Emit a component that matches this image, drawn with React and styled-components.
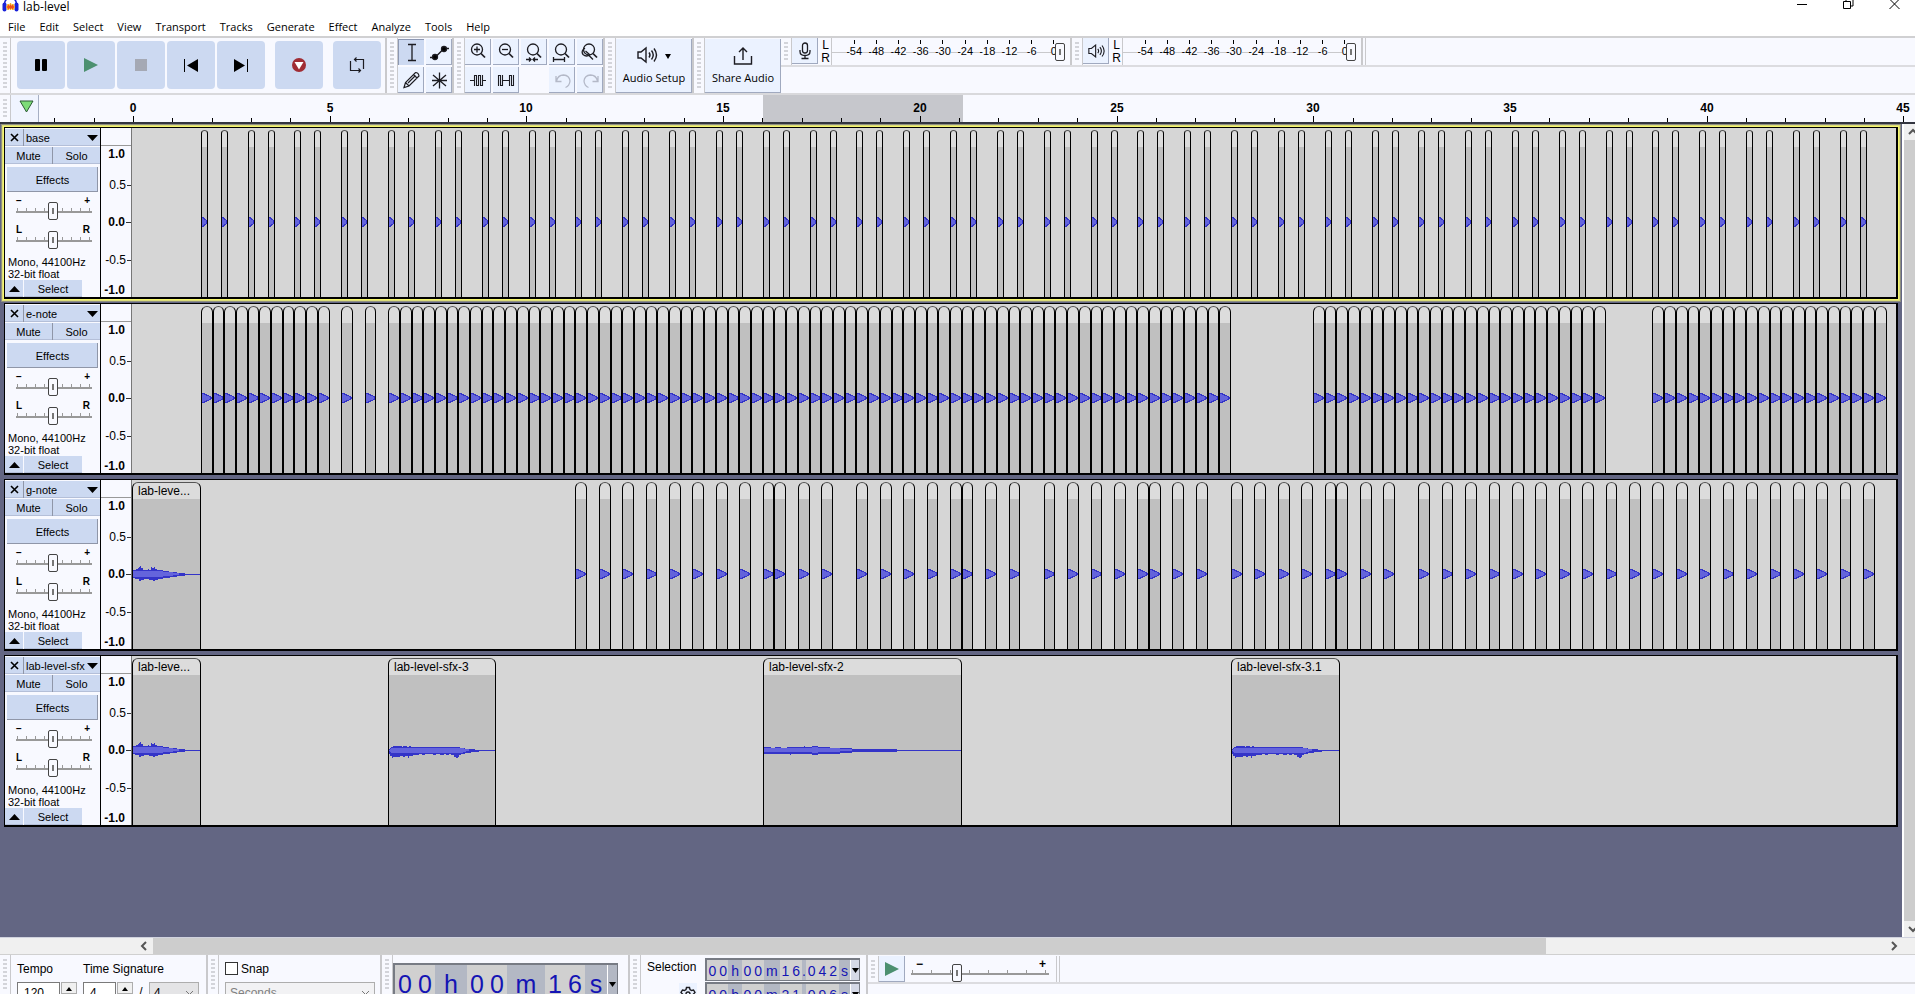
import React from 'react';
import styled, { createGlobalStyle, css } from 'styled-components';

const GlobalStyle = createGlobalStyle`
  * {
    box-sizing: border-box;
  }
  body {
    margin: 0;
    overflow: hidden;
    font-family: 'Liberation Sans', Arial, sans-serif;
    font-size: 12px;
    color: #000;
  }
  button, input, select {
    margin: 0;
    padding: 0;
    border: 0;
    border-radius: 0;
    font: inherit;
    color: inherit;
    background: none;
  }
  svg {
    display: block;
    flex: none;
  }
`;

const SEGOE = "'Open Sans', 'Noto Sans', sans-serif";
const BG = '#f8f9ff';
const LINE = '#c9c9cc';

const Window = styled.div`
  display: flex;
  flex-direction: column;
  height: 100vh;
  background: ${BG};
`;

/* ---------- title + menu ---------- */

const TitleBar = styled.header`
  display: flex;
  flex: none;
  align-items: flex-start;
  gap: 4px;
  height: 14px;
  padding-left: 2px;
  background: #fff;
  font-family: ${SEGOE};
  h1 {
    flex: 1;
    margin: 0;
    font-size: 12px;
    line-height: 14px;
    font-weight: 400;
  }
`;

const WindowButton = styled.button`
  display: flex;
  justify-content: center;
  width: 42px;
`;

const MenuBar = styled.nav`
  display: flex;
  flex: none;
  gap: 14px;
  height: 22px;
  padding: 4px 0 0 8px;
  background: #fff;
  font-family: ${SEGOE};
  font-size: 11px;
  line-height: 18px;
`;

/* ---------- toolbars ---------- */

const ToolDock = styled.div`
  display: flex;
  flex: none;
  border-top: 2px solid #d0d0d2;
  border-bottom: 2px solid #d9d9dc;
`;

const Toolbar = styled.div`
  display: flex;
  flex: none;
  border-right: ${(p) => (p.$last ? 0 : 2)}px solid ${LINE};
`;

const Gripper = styled.div`
  flex: none;
  width: 11px;
  padding: 4px 3px;
  border-right: 1px solid ${LINE};
  &::before {
    content: '';
    display: block;
    height: 100%;
    background: repeating-linear-gradient(#d3d4da 0 2px, transparent 2px 4px);
  }
`;

const TransportRow = styled.div`
  display: flex;
  gap: 2px;
  padding: 3px 4px 4px 6px;
`;

const BigButton = styled.button`
  display: flex;
  align-items: center;
  justify-content: center;
  width: 48px;
  height: 48px;
  margin-left: ${(p) => (p.$apart ? 8 : 0)}px;
  border-radius: 4px;
  background: #ccd9f1;
`;

const ToolGrid = styled.div`
  display: grid;
  grid-template-columns: repeat(${(p) => p.$cols}, 26px);
  grid-auto-rows: 26px;
  gap: 2px;
  padding-top: 1px;
`;

const raised = css`
  background: #ebf2ff;
  box-shadow: inset -1px -1px #a0a9bf;
`;

const ToolButton = styled.button`
  display: flex;
  flex: none;
  align-items: center;
  justify-content: center;
  width: 26px;
  height: 26px;
  ${raised}
  ${(p) =>
    p.$pressed &&
    css`
      background: #ccd9f1;
      box-shadow: inset 1px 1px #8c97b2;
    `}
`;

const LabelledButton = styled.button`
  display: flex;
  flex-direction: column;
  align-items: center;
  justify-content: space-between;
  width: 76px;
  margin-top: 1px;
  padding: 7px 0 7px;
  ${raised}
  font-family: ${SEGOE};
  font-size: 11px;
  line-height: 16px;
  white-space: nowrap;
`;

const MeterDock = styled.div`
  flex: 1;
  min-width: 0;
`;

const MeterRow = styled.div`
  display: flex;
  height: 29px;
  border-bottom: 2px solid #dcdce0;
`;

const Meter = styled.div`
  display: flex;
  width: 291px;
  padding-right: 5px;
  border-right: 2px solid ${LINE};
`;

const Channels = styled.div`
  display: flex;
  flex-direction: column;
  align-items: center;
  width: 13px;
  padding: 1px 0 0 2px;
  line-height: 13px;
`;

const MeterScale = styled.div`
  position: relative;
  display: flex;
  flex: 1;
  padding-left: 11px;
  border-left: 1px solid ${LINE};
  background: linear-gradient(${LINE}, ${LINE}) 0 14px / 100% 1px no-repeat;
  font-size: 11px;
`;

const MeterMark = styled.div`
  display: flex;
  flex: 1;
  flex-direction: column;
  align-items: center;
  line-height: 11px;
  &::before {
    content: '';
    width: 1px;
    height: 4px;
    margin: 2px 0;
    background: #000;
  }
  span {
    background: ${BG};
  }
`;

const thumb = css`
  appearance: none;
  width: 10px;
  height: 18px;
  border: 1px solid #444;
  border-radius: 2px;
  background: linear-gradient(#777, #777) center / 2px 6px no-repeat #f8f9ff;
`;

const MeterSlider = styled.input`
  appearance: none;
  position: absolute;
  inset: 4px 0 auto 0;
  width: 100%;
  height: 20px;
  &::-webkit-slider-thumb {
    ${thumb}
  }
`;

const Slider = styled.input`
  appearance: none;
  display: block;
  width: ${(p) => p.$width}px;
  height: 18px;
  background:
    linear-gradient(#999, #999) 0 9px / 100% 2px no-repeat,
    repeating-linear-gradient(90deg, #999 0 1px, transparent 1px ${(p) => p.$step}px) 1px 6px / 100% 3px no-repeat;
  &::-webkit-slider-thumb {
    ${thumb}
  }
`;

/* ---------- timeline ---------- */

const TimelineRow = styled.div`
  display: flex;
  flex: none;
  height: 29px;
  border-bottom: 2px solid #33353f;
`;

const PinButton = styled.button`
  display: flex;
  justify-content: center;
  width: 28px;
  padding: 5px 0 0 3px;
  border-right: 1px solid #a6afc4;
  background: #f0f4ff;
`;

const TimeRuler = styled.div`
  position: relative;
  flex: 1;
  overflow: hidden;
`;

const RulerSelection = styled.div`
  position: absolute;
  top: 0;
  bottom: 0;
  background: #c6c7cc;
`;

const RulerTick = styled.div`
  position: absolute;
  bottom: 0;
  width: 1px;
  height: ${(p) => (p.$major ? 6 : 4)}px;
  background: #000;
`;

const RulerLabel = styled.span`
  position: absolute;
  top: 6px;
  width: 30px;
  margin-left: -15px;
  font-weight: 700;
  line-height: 14px;
  text-align: center;
`;

/* ---------- tracks ---------- */

const Workspace = styled.div`
  display: flex;
  flex: 1;
  min-height: 0;
`;

const TrackArea = styled.main`
  display: flex;
  flex: 1;
  flex-direction: column;
  gap: 4px;
  min-width: 0;
  padding: 3px 4px 0;
  overflow: hidden;
  background: #636683;
`;

const TrackBox = styled.section`
  display: flex;
  flex: none;
  height: 172px;
  border: solid #000;
  border-width: 1px 2px 2px 1px;
  ${(p) =>
    p.$focused &&
    css`
      box-shadow: 0 0 0 1px #f6f66e, 0 0 0 2px #dcdc78, 0 0 0 3px #8f9080;
    `}
`;

const Panel = styled.div`
  display: flex;
  flex: none;
  flex-direction: column;
  width: 96px;
  padding-top: 1px;
  background: ${BG};
  border-right: 1px solid #000;
  font-size: 11px;
`;

const PanelRow = styled.div`
  display: flex;
  flex: none;
  gap: 1px;
  background: ${(p) => (p.$plain ? 'transparent' : '#8f96a8')};
  margin-bottom: ${(p) => (p.$plain ? 0 : 1)}px;
`;

const PanelButton = styled.button`
  display: flex;
  flex: ${(p) => (p.$width ? 'none' : 1)};
  align-items: center;
  justify-content: ${(p) => (p.$spread ? 'space-between' : 'center')};
  width: ${(p) => (p.$width ? `${p.$width}px` : 'auto')};
  min-width: 0;
  height: 17px;
  padding: ${(p) => (p.$spread ? '0 2px' : 0)};
  background: #ccd9f1;
  box-shadow: inset 0 -1px #b4bfd8;
  white-space: nowrap;
`;

const EffectsButton = styled.button`
  flex: none;
  height: 25px;
  margin: 2px 2px 6px;
  background: #ccd9f1;
  box-shadow: inset -1px -1px #8f96a8;
`;

const SliderBox = styled.label`
  position: relative;
  display: block;
  height: 29px;
  padding: 4px 0 0 11px;
`;

const SliderEnd = styled.span`
  position: absolute;
  top: -3px;
  ${(p) => (p.$right ? 'right: 10px' : 'left: 11px')};
  font-size: 10px;
  font-weight: 700;
  line-height: 12px;
`;

const TrackInfo = styled.p`
  flex: 1;
  margin: 0;
  padding: 0 0 0 3px;
  line-height: 12px;
`;

const LevelRuler = styled.div`
  display: grid;
  flex: none;
  grid-template-rows: 18px 17px 45px 29px 47px 1fr;
  width: 31px;
  border-right: 1px solid #777;
  background: ${BG};
`;

const LevelHead = styled.div`
  border-bottom: 1px solid #999;
`;

const Level = styled.div`
  display: flex;
  align-items: center;
  justify-content: flex-end;
  gap: 1px;
  padding-right: ${(p) => (p.$tick ? 0 : 6)}px;
  font-weight: ${(p) => (p.$bold ? 700 : 400)};
  line-height: 11px;
  &::after {
    content: '';
    display: ${(p) => (p.$tick ? 'block' : 'none')};
    width: ${(p) => p.$tick}px;
    height: 1px;
    background: #333;
  }
`;

const Lane = styled.div`
  position: relative;
  flex: 1;
  overflow: hidden;
  background: #d6d6d6;
`;

const ClipBox = styled.div`
  position: absolute;
  top: 2px;
  bottom: 0;
  padding-left: 5px;
  border: 1px solid #000;
  border-top-color: #555;
  border-bottom: 0;
  border-radius: 6px 6px 0 0;
  background: linear-gradient(#dcdcdc 16px, #c0c0c0 16px);
  line-height: 16px;
  white-space: nowrap;
  overflow: hidden;
`;

const WaveSvg = styled.svg`
  position: absolute;
  left: 0;
  top: 81px;
`;

/* ---------- scrollbars ---------- */

const ScrollColumn = styled.div`
  display: flex;
  flex: none;
  flex-direction: column;
  width: 13px;
  border-left: 2px solid #fff;
  background: #f0f0f0;
  overflow: hidden;
`;

const ScrollRow = styled.div`
  display: flex;
  flex: none;
  height: 18px;
  padding-left: 135px;
  border-top: 1px solid #d0d2de;
  border-bottom: 1px solid #d0d0d0;
  background: #f0f0f0;
`;

const ScrollArrow = styled.button`
  display: flex;
  flex: none;
  align-items: center;
  justify-content: center;
  width: 18px;
  height: 16px;
`;

const ScrollTrack = styled.div`
  flex: 1;
`;

const ScrollCorner = styled.div`
  width: 12px;
`;

const ScrollThumb = styled.div`
  width: ${(p) => p.$size};
  height: 100%;
  background: #cdcdcd;
`;

/* ---------- bottom toolbars ---------- */

const BottomDock = styled.footer`
  display: flex;
  flex: none;
  height: 39px;
  overflow: hidden;
`;

const TempoGrid = styled.div`
  display: grid;
  grid-template-columns: 66px 123px;
  grid-template-rows: 27px 22px;
  padding: 0 0 0 6px;
  line-height: 28px;
`;

const FieldRow = styled.div`
  display: flex;
  gap: 1px;
  line-height: 20px;
`;

const NumberField = styled.input`
  width: ${(p) => p.$width}px;
  height: 22px;
  padding-left: 6px;
  border: 1px solid #7a7a7a;
  background: #fff;
`;

const SpinButton = styled.button`
  display: flex;
  justify-content: center;
  width: 16px;
  height: 12px;
  padding-top: 4px;
  border: 1px solid #adadad;
  background: #f0f0f0;
`;

const Choice = styled.select`
  appearance: none;
  flex: none;
  width: ${(p) => p.$width}px;
  height: 22px;
  padding-left: 4px;
  border: 1px solid #adadad;
  background:
    url("data:image/svg+xml,%3Csvg xmlns='http://www.w3.org/2000/svg' width='9' height='6'%3E%3Cpath d='M1 1l3.500 3.500L8 1' fill='none' stroke='%23777'/%3E%3C/svg%3E")
      right 4px center no-repeat,
    ${(p) => p.$fill};
  color: ${(p) => p.$ink};
  opacity: 1;
`;

const SnapBox = styled.div`
  display: flex;
  flex-direction: column;
  width: 161px;
  padding-left: 6px;
  label {
    display: flex;
    flex: none;
    align-items: center;
    gap: 3px;
    height: 27px;
  }
`;

const Check = styled.input`
  appearance: none;
  width: 13px;
  height: 13px;
  border: 1px solid #333;
  background: #fff;
`;

const TimeBox = styled.div`
  display: flex;
  flex: none;
  height: ${(p) => (p.$big ? 56 : 23)}px;
  margin-top: ${(p) => (p.$big ? 8 : 0)}px;
  border: solid #777b84;
  border-width: 2px 1px 1px 2px;
  background: #b3b8c4;
  color: #1414b4;
  font-size: ${(p) => (p.$big ? 25 : 14)}px;
  line-height: ${(p) => (p.$big ? 38 : 22)}px;
`;

const TimeCell = styled.span`
  width: ${(p) => p.$width}px;
  background: ${(p) => (p.$digit ? '#d0d0d0' : 'transparent')};
  text-align: center;
`;

const TimeMenu = styled.button`
  display: flex;
  align-items: ${(p) => (p.$big ? 'flex-start' : 'center')};
  justify-content: center;
  width: 9px;
  padding-top: ${(p) => (p.$big ? 17 : 0)}px;
  background: ${(p) => (p.$big ? '#b3b8c4' : '#d5d9e6')};
  border-left: 1px solid #fff;
`;

const TimeToolbar = styled.div`
  width: 235px;
  padding-right: 10px;
`;

const SelectionGrid = styled.div`
  display: grid;
  grid-template-columns: 58px 155px;
  grid-template-rows: 23px 23px;
  row-gap: 1px;
  width: 225px;
  padding: 3px 0 0 6px;
  line-height: 18px;
`;

const GearButton = styled.button`
  justify-self: end;
  width: 18px;
  margin: 1px 8px 0 0;
  padding: 1px;
  background: #ebf2ff;
`;

const PlaySpeed = styled.div`
  flex: 1;
  > div {
    display: flex;
    height: 29px;
    padding-top: 1px;
    border-bottom: 2px solid #dcdce0;
  }
`;

const SpeedSlider = styled.label`
  position: relative;
  width: 152px;
  padding: 8px 0 0 6px;
  border-right: 1px solid ${LINE};
  span {
    top: 2px;
    font-size: 12px;
  }
`;

const Edge = styled.i`
  width: 3px;
  border-right: 1px solid ${LINE};
`;

/* ---------- icons ---------- */

function Icon({ w = 20, h = w, children, ...rest }) {
  return (
    <svg width={w} height={h} viewBox={`0 0 ${w} ${h}`} fill="none" stroke="#1c1c22" strokeWidth="1.3" {...rest}>
      {children}
    </svg>
  );
}

const Lens = ({ children }) => (
  <Icon>
    <circle cx="9" cy="7.5" r="5.5" />
    <path d="M13 11.5l4 4" strokeWidth="1.7" />
    {children}
  </Icon>
);

const Down = ({ w = 8, h = 5 }) => (
  <svg width={w} height={h} viewBox="0 0 8 5" preserveAspectRatio="none">
    <path d="M0 0h8L4 5z" />
  </svg>
);

const Chevron = ({ d }) => (
  <Icon w={10} h={10} stroke="#555" strokeWidth="2">
    <path d={d} />
  </Icon>
);

const Speaker = ({ w, h }) => (
  <svg width={w} height={h} viewBox="0 0 20 16" fill="none" stroke="#1c1c22" strokeWidth="1.3">
    <path d="M1 5h3l5-4v14l-5-4H1z" />
    <path d="M11.5 5.5q2 2.500 0 5M14 3.500q3.500 4.500 0 9M16.500 1.500q5 6.500 0 13" />
  </svg>
);

const Microphone = () => (
  <Icon w={14} h={18}>
    <rect x="4.5" y="1" width="5" height="10" rx="2.5" />
    <path d="M2 8v1.500q0 4 5 4t5-4V8M7 13.500V16M3.500 16.500h7" />
  </Icon>
);

const Logo = () => (
  <svg width="17" height="13" viewBox="0 0 17 13">
    <path d="M2.500 6V4Q3-2 8.500-2t6 6v2" fill="none" stroke="#1a22d8" strokeWidth="1.5" />
    <rect x="0.5" y="2.5" width="4" height="9" rx="2" fill="#1a22d8" />
    <rect x="12.5" y="2.5" width="4" height="9" rx="2" fill="#1a22d8" />
    <path d="M4.500 7L6 4l1.500 1.500L8.500 3l1 2.500L11 4l1.500 3-1.500 3-1.500-1.500-1 1.500-1-1.500L6 10z" fill="#f0501e" stroke="#ffb420" />
  </svg>
);

/* ---------- data ---------- */

const MENUS = ['File', 'Edit', 'Select', 'View', 'Transport', 'Tracks', 'Generate', 'Effect', 'Analyze', 'Tools', 'Help'];
const METER_MARKS = [-54, -48, -42, -36, -30, -24, -18, -12, -6, 0];

const PX_PER_SECOND = 39.34;
const RULER_ZERO = 94;
const FIRST_NOTE = 69.3;
const NOTE = 11.707;

const noteX = (n) => Math.floor(FIRST_NOTE + n * NOTE);
const range = (from, to, step = 1) => {
  const out = [];
  for (let n = from; n <= to; n += step) out.push(n);
  return out;
};

const noteClips = (notes) => notes.map((n) => ({ x: noteX(n), w: noteX(n + 1) - noteX(n), wave: 'note' }));

const baseClips = range(0, 35).flatMap((bar) => {
  const x = noteX(bar * 4);
  return [
    { x, w: 7, wave: 'hit' },
    { x: x + 20, w: 7, wave: 'hit' },
  ];
});

const intro = { x: 0, w: 69, name: 'lab-leve...', wave: 'intro' };

const TRACKS = [
  { name: 'base', focused: true, clips: baseClips },
  { name: 'e-note', clips: noteClips([...range(0, 10), 12, 14, ...range(16, 87), ...range(95, 119), ...range(124, 143)]) },
  {
    name: 'g-note',
    clips: [
      intro,
      ...noteClips([
        ...range(32, 48, 2), 49, 51, 53,
        ...range(56, 64, 2), 65, 67, 69,
        ...range(72, 80, 2), 81, 83, 85,
        ...range(88, 96, 2), 97, 99, 101,
        ...range(104, 142, 2),
      ]),
    ],
  },
  {
    name: 'lab-level-sfx',
    clips: [
      intro,
      { x: 256, w: 108, name: 'lab-level-sfx-3', wave: 'sfx3' },
      { x: 631, w: 199, name: 'lab-level-sfx-2', wave: 'sfx2' },
      { x: 1099, w: 109, name: 'lab-level-sfx-3.1', wave: 'sfx3' },
    ],
  },
];

// peak and rms outlines, drawn around y = 10
const WAVES = {
  hit: ['M0 5h2v1h1v1h1v1h1v4H4v1H3v1H2v1H0z', 'M0 6h1v1h1v1h2v4H2v1H1v1H0z'],
  note: ['M0 5h3v1h2v1h2v1h2v1h1v2H9v1H7v1H5v1H3v1H0z', 'M0 6h2v1h2v1h3v1h1v2H7v1H4v1H2v1H0z'],
  intro: [
    'M0 6h3V5h2V4h1V3h1V2h1v2h2v2h5V5h1v1h2V3h1v1h2V3h1v2h2v1h6v1h6v1h8v1h8v1h20v1H52v1h-8v1h-7v1h-7v1h-5v1h-3v1h-2v-1h-4v-1h-5v1h-3v2H8v-1H6v-2H2v-1H0z',
    'M0 7h26l8 1 12 1v2l-12 1-8 1H0z',
  ],
  sfx3: [
    'M0 9h1V8h1V7h2V6h9v1h1V6h4v1h2V6h2v1h49v1h5v1h10v1h22v1H90v1h-8v1h-6v1h-4v1h-2v2h-1v1h-2v-1h-2v-2h-3v-1h-2v1h-3v-1h-2v1h-4v-1h-4v1h-3v-1h-8v1h-3v-1h-3v1h-6v1h-4v2h-1v-2h-3v1h-2v-1h-3v1H4v1H3v-2H1v-2H0z',
    'M0 10l2-2h70l10 2-10 3H2z',
  ],
  sfx2: [
    'M0 7h7v1h4V7h6v1h6V7h17V6h1v1h7V6h6v1h12v1h22v1h45v1h65v1H133v1H88v1H76v1H54v1h-6v-1H27v1h-1v-1H0z',
    'M0 8h48V7h6v1h22v1h12v2H76v1H54v1h-6v-1H0z',
  ],
};

/* ---------- parts ---------- */

function Clip({ x, w, name, wave }) {
  const [peak, rms] = WAVES[wave];
  return (
    <ClipBox style={{ left: x, width: w }}>
      {name}
      <WaveSvg width={w - 2} height="20" shapeRendering="crispEdges">
        <path d={peak} fill="#3434c8" />
        <path d={rms} fill="#6464dc" />
      </WaveSvg>
    </ClipBox>
  );
}

function Track({ name, focused, clips }) {
  return (
    <TrackBox $focused={focused} aria-label={name}>
      <Panel>
        <PanelRow>
          <PanelButton $width={18} aria-label="Close track">
            <Icon w={9} strokeWidth="1.6" stroke="#000">
              <path d="M1 1l7 7M8 1L1 8" />
            </Icon>
          </PanelButton>
          <PanelButton $spread>
            {name}
            <Down w={11} h={6} />
          </PanelButton>
        </PanelRow>
        <PanelRow>
          <PanelButton>Mute</PanelButton>
          <PanelButton>Solo</PanelButton>
        </PanelRow>
        <EffectsButton>Effects</EffectsButton>
        <SliderBox>
          <SliderEnd>−</SliderEnd>
          <Slider type="range" aria-label="Gain" $width={76} $step={9} defaultValue="48" />
          <SliderEnd $right>+</SliderEnd>
        </SliderBox>
        <SliderBox>
          <SliderEnd>L</SliderEnd>
          <Slider type="range" aria-label="Pan" $width={76} $step={9} defaultValue="48" />
          <SliderEnd $right>R</SliderEnd>
        </SliderBox>
        <TrackInfo>
          Mono, 44100Hz
          <br />
          32-bit float
        </TrackInfo>
        <PanelRow $plain>
          <PanelButton $width={18} aria-label="Collapse">
            <svg width="11" height="6" viewBox="0 0 11 6">
              <path d="M0 6h11L5.500 0z" />
            </svg>
          </PanelButton>
          <PanelButton $width={58}>Select</PanelButton>
        </PanelRow>
      </Panel>
      <LevelRuler>
        <LevelHead />
        <Level $bold>1.0</Level>
        <Level $tick={4}>0.5</Level>
        <Level $tick={5} $bold>0.0</Level>
        <Level $tick={4}>-0.5</Level>
        <Level $bold>-1.0</Level>
      </LevelRuler>
      <Lane>
        {clips.map((clip) => (
          <Clip key={clip.x} {...clip} />
        ))}
      </Lane>
    </TrackBox>
  );
}

function LevelMeter({ label, children }) {
  return (
    <Meter>
      <Gripper />
      <ToolButton aria-label={label}>{children}</ToolButton>
      <Channels>
        <span>L</span>
        <span>R</span>
      </Channels>
      <MeterScale>
        {METER_MARKS.map((db) => (
          <MeterMark key={db}>
            <span>{db}</span>
          </MeterMark>
        ))}
        <MeterSlider type="range" aria-label={`${label} level`} defaultValue="100" />
      </MeterScale>
    </Meter>
  );
}

function TimeField({ value, widths, big, label }) {
  return (
    <TimeBox $big={big} role="group" aria-label={label}>
      {value.split('').map((char, i) => (
        <TimeCell key={i} $digit={/\d/.test(char)} $width={widths[char] || widths.digit}>
          {char}
        </TimeCell>
      ))}
      <TimeMenu $big={big} aria-label={`${label} format`}>
        <Down w={7} h={5} />
      </TimeMenu>
    </TimeBox>
  );
}

const SMALL_CELLS = { digit: 11, h: 14, m: 17, '.': 5, s: 12 };
const BIG_CELLS = { digit: 20, h: 32, m: 38, s: 22 };

function Spin({ label }) {
  return (
    <SpinButton aria-label={label}>
      <svg width="6" height="4" viewBox="0 0 6 4">
        <path d="M0 4h6L3 0z" />
      </svg>
    </SpinButton>
  );
}

export default function App() {
  return (
    <Window>
      <GlobalStyle />
      <TitleBar>
        <Logo />
        <h1>lab-level</h1>
        <WindowButton aria-label="Minimize">
          <Icon w={11} h={11} strokeWidth="1" stroke="#000"><path d="M0 4.500h10" /></Icon>
        </WindowButton>
        <WindowButton aria-label="Restore">
          <Icon w={11} h={11} strokeWidth="1" stroke="#000"><path d="M.5 1.500h7v7h-7zM3 1V-.5h7V6H8" /></Icon>
        </WindowButton>
        <WindowButton aria-label="Close">
          <Icon w={11} h={11} strokeWidth="1" stroke="#000"><path d="M.5-1l10 10M10.500-1l-10 10" /></Icon>
        </WindowButton>
      </TitleBar>
      <MenuBar>
        {MENUS.map((menu) => (
          <button key={menu}>{menu}</button>
        ))}
      </MenuBar>

      <ToolDock>
        <Toolbar>
          <Gripper />
          <TransportRow>
            <BigButton aria-label="Pause">
              <svg width="12" height="12"><path d="M0 1q0-1 1-1h3q1 0 1 1v10q0 1-1 1H1q-1 0-1-1zM7 1q0-1 1-1h3q1 0 1 1v10q0 1-1 1H8q-1 0-1-1z" /></svg>
            </BigButton>
            <BigButton aria-label="Play">
              <svg width="14" height="14"><path d="M0 0l14 7-14 7z" fill="#4c9070" /></svg>
            </BigButton>
            <BigButton aria-label="Stop">
              <svg width="12" height="12"><path d="M0 0h12v12H0z" fill="#a5a9b4" /></svg>
            </BigButton>
            <BigButton aria-label="Skip to start">
              <svg width="14" height="13"><path d="M0 0h1v13H0zM14 0v13L3 6.500z" /></svg>
            </BigButton>
            <BigButton aria-label="Skip to end">
              <svg width="14" height="13"><path d="M13 0h1v13h-1zM0 0v13l11-6.500z" /></svg>
            </BigButton>
            <BigButton $apart aria-label="Record">
              <svg width="14" height="14">
                <circle cx="7" cy="7" r="7" fill="#a02c34" />
                <path d="M2.500 4h9L7 11.500z" fill="#fff" />
              </svg>
            </BigButton>
            <BigButton $apart aria-label="Loop">
              <Icon w={16} strokeWidth="1.2">
                <path d="M1.500 4v9.500h10M14.500 12V2.500h-9M7.500.5L5.500 2.500l2 2M9.500 11.500l2 2-2 2" />
              </Icon>
            </BigButton>
          </TransportRow>
        </Toolbar>

        <Toolbar>
          <Gripper />
          <ToolGrid $cols={2}>
            <ToolButton $pressed aria-label="Selection tool">
              <Icon><path d="M7 2.500h8M7 18.500h8M11 2.500v16" /></Icon>
            </ToolButton>
            <ToolButton aria-label="Envelope tool">
              <Icon>
                <path d="M1 15.500h5L15 6.500h5" />
                <circle cx="6" cy="15" r="2.5" fill="#000" />
                <circle cx="15" cy="7" r="2.5" fill="#000" />
              </Icon>
            </ToolButton>
            <ToolButton aria-label="Draw tool">
              <Icon><path d="M3 17.500l1.500-5L14.500 2.500q3 0 3.500 3.500L8 16zM12.500 4.500L16 8M4.500 12.500L8 16M7 13L14.500 5.500" strokeWidth="1.2" /></Icon>
            </ToolButton>
            <ToolButton aria-label="Multi-tool">
              <Icon><path d="M10.500 2.500v16M3 10.500h15M4 5l13 11M17 5L4 16" /></Icon>
            </ToolButton>
          </ToolGrid>
        </Toolbar>

        <Toolbar>
          <Gripper />
          <ToolGrid $cols={5}>
            <ToolButton aria-label="Zoom in"><Lens><path d="M6 7.500h6M9 4.500v6" /></Lens></ToolButton>
            <ToolButton aria-label="Zoom out"><Lens><path d="M6 7.500h6" /></Lens></ToolButton>
            <ToolButton aria-label="Fit selection">
              <Lens><path d="M2 17.500h5M9 17.500h5M5 15.500l2 2-2 2M11 15.500l-2 2 2 2" /></Lens>
            </ToolButton>
            <ToolButton aria-label="Fit project">
              <Lens><path d="M1.500 17.500h11M1.500 15v5M12.500 15v5" /></Lens>
            </ToolButton>
            <ToolButton aria-label="Zoom toggle">
              <Lens><path d="M5 6Q.5 9 3 12.500q3.500 3 7 0M9 13.500l4 4M5.500 9l4 3.500" /></Lens>
            </ToolButton>
            <ToolButton aria-label="Trim outside selection">
              <Icon><path d="M2 10.500h4M6.500 5v11M8.500 5v11M10.500 5v11M12.500 5v11M14.500 5v11M15 10.500h3M6 5.500h3M10 5.500h3M8 15.500h3M12 15.500h3" strokeWidth="1.1" /></Icon>
            </ToolButton>
            <ToolButton aria-label="Silence selection">
              <Icon><path d="M2.500 5v11M4.500 5v11M6.500 5v11M7 10.500h6M13.500 5v11M15.500 5v11M17.500 5v11M2 5.500h3M4 15.500h3M13 5.500h3M15 15.500h3" strokeWidth="1.1" /></Icon>
            </ToolButton>
            <i />
            <ToolButton aria-label="Undo">
              <Icon stroke="#b4b9c8"><path d="M4 6v5.500h5.500M4.500 11Q6 5 11.500 5q6 .5 6.500 6-.5 5-4.500 6.500" /></Icon>
            </ToolButton>
            <ToolButton aria-label="Redo">
              <Icon stroke="#b4b9c8"><path d="M18 6v5.500h-5.500M17.500 11Q16 5 10.500 5q-6 .5-6.500 6 .5 5 4.500 6.500" /></Icon>
            </ToolButton>
          </ToolGrid>
        </Toolbar>

        <Toolbar>
          <Gripper />
          <LabelledButton>
            <svg width="34" height="18" viewBox="0 0 34 18">
              <g fill="none" stroke="#1c1c22" strokeWidth="1.4">
                <path d="M1 6h3l5-4v14l-5-4H1z" />
                <path d="M12 6.500q2 2.500 0 5M14.500 4.500q3.500 4.500 0 9M17 2.500q5 6.500 0 13" />
              </g>
              <path d="M28 8h6l-3 5z" />
            </svg>
            Audio Setup
          </LabelledButton>
        </Toolbar>

        <Toolbar $last>
          <Gripper />
          <LabelledButton>
            <Icon w={20} h={19} strokeWidth="1.4"><path d="M1.500 10v8h17v-8M10 14V2M6 6l4-4 4 4" /></Icon>
            Share Audio
          </LabelledButton>
        </Toolbar>

        <MeterDock>
          <MeterRow>
            <LevelMeter label="Record meter"><Microphone /></LevelMeter>
            <LevelMeter label="Playback meter"><Speaker w={17} h={14} /></LevelMeter>
            <Edge />
          </MeterRow>
        </MeterDock>
      </ToolDock>

      <TimelineRow>
        <Gripper />
        <PinButton aria-label="Pinned play head">
          <svg width="15" height="13" viewBox="0 0 15 13">
            <path d="M1 1h13L7.500 12z" fill="#7ddc78" stroke="#2c5a34" />
          </svg>
        </PinButton>
        <TimeRuler>
          <RulerSelection style={{ left: 724, width: 200 }} />
          {range(-2, 45).map((s) => {
            const left = RULER_ZERO + Math.round(s * PX_PER_SECOND);
            const major = s >= 0 && s % 5 === 0;
            return (
              <React.Fragment key={s}>
                <RulerTick $major={major} style={{ left }} />
                {major && <RulerLabel style={{ left }}>{s}</RulerLabel>}
              </React.Fragment>
            );
          })}
        </TimeRuler>
      </TimelineRow>

      <Workspace>
        <TrackArea>
          {TRACKS.map((track) => (
            <Track key={track.name} {...track} />
          ))}
        </TrackArea>
        <ScrollColumn>
          <ScrollArrow aria-label="Scroll up"><Chevron d="M1 7l4-4 4 4" /></ScrollArrow>
          <ScrollTrack><ScrollThumb $size="100%" /></ScrollTrack>
          <ScrollArrow aria-label="Scroll down"><Chevron d="M1 3l4 4 4-4" /></ScrollArrow>
        </ScrollColumn>
      </Workspace>
      <ScrollRow>
        <ScrollArrow aria-label="Scroll left"><Chevron d="M7 1L3 5l4 4" /></ScrollArrow>
        <ScrollTrack><ScrollThumb $size="80.4%" /></ScrollTrack>
        <ScrollArrow aria-label="Scroll right"><Chevron d="M3 1l4 4-4 4" /></ScrollArrow>
        <ScrollCorner />
      </ScrollRow>

      <BottomDock>
        <Toolbar>
          <Gripper />
          <TempoGrid>
            <label htmlFor="tempo">Tempo</label>
            <label htmlFor="beats">Time Signature</label>
            <FieldRow>
              <NumberField id="tempo" $width={43} defaultValue="120" />
              <Spin label="Raise tempo" />
            </FieldRow>
            <FieldRow>
              <NumberField id="beats" $width={33} defaultValue="4" />
              <Spin label="Raise beats" />
              <TimeCell $width={14}>/</TimeCell>
              <Choice $width={50} $fill="#e4e4e6" $ink="#000" aria-label="Beat unit">
                <option>4</option>
              </Choice>
            </FieldRow>
          </TempoGrid>
        </Toolbar>
        <Toolbar>
          <Gripper />
          <SnapBox>
            <label>
              <Check type="checkbox" />
              Snap
            </label>
            <Choice $width={150} $fill="#f2f2f4" $ink="#808080" disabled aria-label="Snap to">
              <option>Seconds</option>
            </Choice>
          </SnapBox>
        </Toolbar>
        <Toolbar>
          <Gripper />
          <TimeToolbar>
            <TimeField big label="Audio position" value="00h00m16s" widths={BIG_CELLS} />
          </TimeToolbar>
        </Toolbar>
        <Toolbar>
          <Gripper />
          <SelectionGrid>
            <span>Selection</span>
            <TimeField label="Selection start" value="00h00m16.042s" widths={SMALL_CELLS} />
            <GearButton aria-label="Selection options">
              <Icon w={16} strokeWidth="1.4">
                <path d="M6.500 1.500h3l.5 2 1.500 1 2-.5 1.500 2.500-1.500 1.500 1.500 2-1.500 2.500-2-.5-1.500 1-.5 2h-3l-.5-2-1.500-1-2 .5L1 10l1.500-2L1 6.500 2.500 4l2 .5 1.500-1z" />
                <circle cx="8" cy="8" r="2" />
              </Icon>
            </GearButton>
            <TimeField label="Selection end" value="00h00m21.096s" widths={SMALL_CELLS} />
          </SelectionGrid>
        </Toolbar>
        <PlaySpeed>
          <div>
            <Gripper />
            <ToolButton aria-label="Play at speed">
              <svg width="14" height="14"><path d="M0 0l14 7-14 7z" fill="#4c9070" /></svg>
            </ToolButton>
            <SpeedSlider>
              <SliderEnd>−</SliderEnd>
              <Slider type="range" aria-label="Playback speed" $width={138} $step={19} defaultValue="32" />
              <SliderEnd $right>+</SliderEnd>
            </SpeedSlider>
            <Edge />
          </div>
        </PlaySpeed>
      </BottomDock>
    </Window>
  );
}
